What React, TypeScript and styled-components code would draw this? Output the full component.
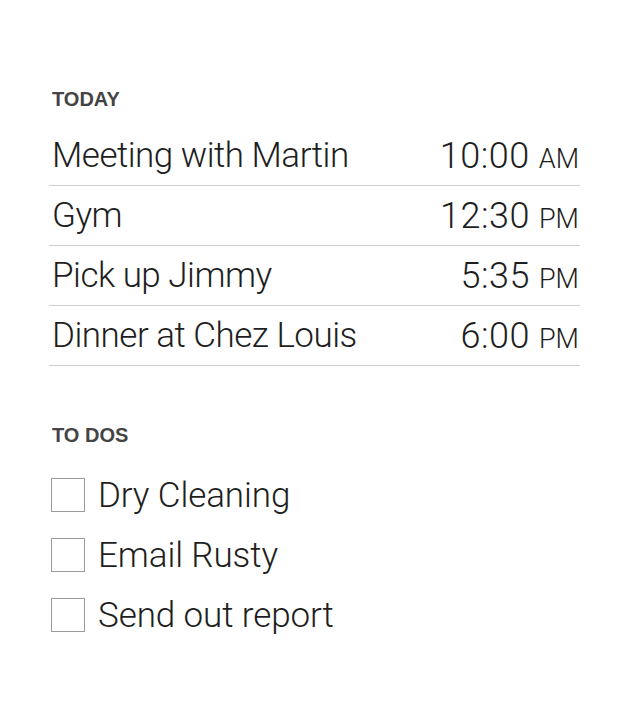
import React from 'react';
import styled, { createGlobalStyle } from 'styled-components';

const GlobalStyle = createGlobalStyle`
  html, body {
    margin: 0;
    padding: 0;
    background: #ffffff;
  }
  body {
    font-family: Roboto, "Liberation Sans", Arial, sans-serif;
    color: #222;
  }
`;

interface EventItem {
  title: string;
  time: string;
  period: string;
}

const events: EventItem[] = [
  { title: 'Meeting with Martin', time: '10:00', period: 'AM' },
  { title: 'Gym', time: '12:30', period: 'PM' },
  { title: 'Pick up Jimmy', time: '5:35', period: 'PM' },
  { title: 'Dinner at Chez Louis', time: '6:00', period: 'PM' },
];

const todos = ['Dry Cleaning', 'Email Rusty', 'Send out report'];

const App: React.FC = () => {
  return (
    <>
      <GlobalStyle />
      <Page>
        <Section>
          <SectionTitle>TODAY</SectionTitle>
          <EventList>
            {events.map((event) => (
              <EventRow key={event.title}>
                <EventTitle>{event.title}</EventTitle>
                <EventTime>
                  {event.time}
                  <Period>{event.period}</Period>
                </EventTime>
              </EventRow>
            ))}
          </EventList>
        </Section>
        <Section spaced>
          <SectionTitle>TO DOS</SectionTitle>
          <TodoList>
            {todos.map((todo) => (
              <TodoRow key={todo}>
                <Checkbox type="checkbox" />
                <TodoLabel>{todo}</TodoLabel>
              </TodoRow>
            ))}
          </TodoList>
        </Section>
      </Page>
    </>
  );
};

const Page = styled.main`
  display: flex;
  flex-direction: column;
  width: 531px;
  padding: 88px 60px 0 49px;
`;

const Section = styled.section.withConfig({
  shouldForwardProp: (prop) => !['spaced'].includes(prop),
})<{ spaced?: boolean }>`
  display: flex;
  flex-direction: column;
  margin-top: ${(props) => (props.spaced ? '58px' : '0')};
`;

const SectionTitle = styled.h2`
  margin: 0;
  padding-left: 3px;
  height: 22px;
  line-height: 22px;
  font-family: "Liberation Sans", Arial, sans-serif;
  font-size: 20px;
  font-weight: 700;
  color: #444;
`;

const EventList = styled.div`
  display: flex;
  flex-direction: column;
  margin-top: 16px;
`;

const EventRow = styled.div`
  display: flex;
  align-items: center;
  justify-content: space-between;
  height: 59px;
  padding: 0 1px 0 3px;
  border-bottom: 1px solid #cfcfcf;
`;

const EventTitle = styled.span`
  font-size: 35px;
  font-weight: 300;
  letter-spacing: -0.5px;
  color: #1e1e1e;
`;

const EventTime = styled.span`
  font-size: 36px;
  font-weight: 300;
  letter-spacing: 0.5px;
  color: #1e1e1e;
`;

const Period = styled.span`
  margin-left: 9px;
  font-size: 27px;
  letter-spacing: 0;
`;

const TodoList = styled.div`
  display: flex;
  flex-direction: column;
  margin-top: 19px;
`;

const TodoRow = styled.label`
  display: flex;
  align-items: center;
  gap: 13px;
  height: 60px;
  padding-left: 2px;
`;

const Checkbox = styled.input`
  appearance: none;
  margin: 0;
  width: 34px;
  height: 34px;
  border: 1px solid #9b9b9b;
  background: #fff;
`;

const TodoLabel = styled.span`
  font-size: 35px;
  font-weight: 300;
  letter-spacing: -0.1px;
  color: #1e1e1e;
`;

export default App;
